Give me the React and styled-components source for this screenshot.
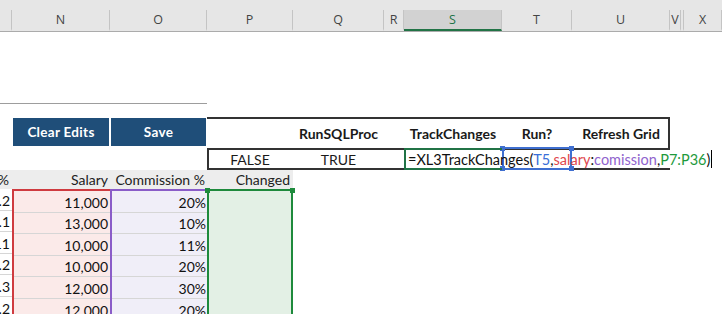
import React from "react";
import styled, { createGlobalStyle } from "styled-components";

const GlobalStyle = createGlobalStyle`
  html, body {
    margin: 0;
    padding: 0;
    background: #fff;
  }
  body {
    font-family: Lato, "Liberation Sans", sans-serif;
  }
`;

const WIDTHS = { M: 12, N: 98, O: 97, P: 86, Q: 91, R: 20, S: 98, T: 70, U: 98, V: 11, W: 3, X: 38 };
const LETTERS = Object.keys(WIDTHS);
// columns too narrow to show their letter
const HIDDEN = ["M", "W"];
const colsOf = (keys) => keys.map((k) => WIDTHS[k] + "px").join(" ");

const Page = styled.div`
  width: 722px;
  height: 314px;
  overflow: hidden;
  background: #fff;
`;

const ColumnBar = styled.div`
  display: flex;
  height: 32px;
  box-sizing: border-box;
  padding-top: 10px;
  background: #e6e6e6;
  border-bottom: 1px solid #ababab;
`;

const ColumnLetter = styled.div`
  flex: none;
  width: ${(p) => p.$w}px;
  box-sizing: border-box;
  display: flex;
  align-items: center;
  justify-content: center;
  overflow: hidden;
  border-right: 1px solid #c4c4c4;
  border-bottom: 2px solid ${(p) => (p.$active ? "#217346" : "transparent")};
  background: ${(p) => (p.$active ? "#d2d2d2" : "transparent")};
  color: ${(p) => (p.$active ? "#217346" : "#444")};
  font-family: "Open Sans", sans-serif;
  font-size: 12.5px;
`;

const Grid = styled.div`
  display: grid;
  grid-template-columns: ${colsOf(LETTERS)};
  grid-template-rows: 72px 13px 31px 22px 19px repeat(6, 21.6px);
`;

const TopRule = styled.div`
  grid-column: 1 / 4;
  grid-row: 1;
  border-bottom: 1px solid #9d9d9d;
`;

const ActionButton = styled.button`
  grid-row: 3;
  grid-column: ${(p) => p.$col};
  margin: 1px 1px 2px 1px;
  border: none;
  padding: 0;
  background: #1f4e79;
  color: #fff;
  font-family: Lato, sans-serif;
  font-weight: 700;
  font-size: 13.5px;
  letter-spacing: 0.3px;
  cursor: pointer;
`;

const Band = styled.div`
  grid-column: 4 / 10;
  grid-row: ${(p) => p.$row};
  display: grid;
  grid-template-columns: ${colsOf(["P", "Q", "R", "S", "T", "U"])};
  box-shadow: ${(p) => p.$edges};
`;

const Label = styled.div`
  grid-column: ${(p) => p.$col};
  display: flex;
  align-items: center;
  justify-content: center;
  padding-top: 2px;
  font-weight: 700;
  font-size: 14px;
  color: #1a1a1a;
  white-space: nowrap;
`;

const Value = styled.div`
  grid-column: ${(p) => p.$col};
  display: flex;
  align-items: center;
  justify-content: center;
  font-size: 14px;
  color: #1a1a1a;
`;

const FormulaCell = styled.div`
  grid-column: 4;
  position: relative;
  z-index: 1;
  box-sizing: border-box;
  border: 2px solid #217346;
  border-right-width: 0;
  display: flex;
  align-items: center;
  padding-left: 2px;
  white-space: nowrap;
  font-size: 14.5px;
  color: #111;
`;

const Ref = styled.span`
  color: ${(p) => p.$c};
`;

const Caret = styled.span`
  display: inline-block;
  width: 0;
  height: 18px;
  margin-left: 1px;
  border-left: 1px solid #000;
  vertical-align: middle;
`;

const RefBox = styled.div`
  grid-column: 5;
  position: relative;
  margin: -1px 0 0 0;
  border: 2px solid #3f6fd0;
`;

const Handle = styled.i`
  position: absolute;
  width: 5px;
  height: 5px;
  background: ${(p) => p.$c};
  ${(p) => (p.$top ? "top: -3px;" : "bottom: -3px;")}
  ${(p) => (p.$left ? "left: -4px;" : "right: -4px;")}
`;

const HeadRow = styled.div`
  grid-column: 1 / 5;
  grid-row: 5;
  display: grid;
  grid-template-columns: ${colsOf(["M", "N", "O", "P"])};
  background: #ededed;
`;

const HeadCell = styled.div`
  display: flex;
  justify-content: flex-end;
  align-items: flex-end;
  overflow: hidden;
  padding: 0 ${(p) => p.$pad}px 1px 0;
  font-size: 14px;
  color: #222;
  white-space: nowrap;
`;

const DataArea = styled.div`
  grid-column: 1 / 5;
  grid-row: 6 / span 6;
  display: grid;
  grid-template-columns: ${colsOf(["M", "N", "O", "P"])};
`;

const DataColumn = styled.div`
  position: relative;
  display: grid;
  grid-template-rows: repeat(6, 21.6px);
  background: ${(p) => p.$fill || "#fff"};
  box-sizing: border-box;
  ${(p) =>
    p.$edge &&
    `border-left: 2px solid ${p.$edge};
     border-top: 2px solid ${p.$edge};`}
  ${(p) => p.$boxed && `border-right: 2px solid ${p.$edge};`}
`;

const DataCell = styled.div`
  display: flex;
  justify-content: flex-end;
  align-items: flex-end;
  overflow: hidden;
  padding: 0 ${(p) => p.$pad}px 1px 0;
  border-bottom: 1px solid #d6d6d6;
  font-size: 14px;
  color: #111;
  white-space: nowrap;
`;

const rows = [
  { bonus: "0.2", salary: "11,000", pct: "20%" },
  { bonus: "0.1", salary: "13,000", pct: "10%" },
  { bonus: "0.11", salary: "10,000", pct: "11%" },
  { bonus: "0.2", salary: "10,000", pct: "20%" },
  { bonus: "0.3", salary: "12,000", pct: "30%" },
  { bonus: "0.2", salary: "12,000", pct: "20%" },
];

const App = () => {
  return (
    <Page>
      <GlobalStyle />
      <ColumnBar>
        {LETTERS.map((k) => (
          <ColumnLetter key={k} $w={WIDTHS[k]} $active={k === "S"}>
            {HIDDEN.includes(k) ? null : k}
          </ColumnLetter>
        ))}
      </ColumnBar>
      <Grid>
        <TopRule />
        <ActionButton $col={2}>Clear Edits</ActionButton>
        <ActionButton $col={3}>Save</ActionButton>

        <Band $row={3} $edges="inset 0 2px 0 #333, inset -2px 0 0 #333">
          <Label $col={2}>RunSQLProc</Label>
          <Label $col={4}>TrackChanges</Label>
          <Label $col={5}>Run?</Label>
          <Label $col={6}>Refresh Grid</Label>
        </Band>

        <Band $row={4} $edges="inset 0 2px 0 #333, inset 2px 0 0 #333, inset 0 -2px 0 #333">
          <Value $col={1}>FALSE</Value>
          <Value $col={2}>TRUE</Value>
          <FormulaCell>
            =XL3TrackChanges(<Ref $c="#3a6fd8">T5</Ref>,<Ref $c="#e0474c">salary</Ref>:
            <Ref $c="#9063cd">comission</Ref>,<Ref $c="#1e9a3c">P7:P36</Ref>)<Caret />
          </FormulaCell>
          <RefBox>
            <Handle $c="#3f6fd0" $top $left />
            <Handle $c="#3f6fd0" $top />
            <Handle $c="#3f6fd0" $left />
            <Handle $c="#3f6fd0" />
          </RefBox>
        </Band>

        <HeadRow>
          <HeadCell $pad={3}>Bonus %</HeadCell>
          <HeadCell $pad={2}>Salary</HeadCell>
          <HeadCell $pad={2}>Commission %</HeadCell>
          <HeadCell $pad={3}>Changed</HeadCell>
        </HeadRow>

        <DataArea>
          <DataColumn>
            {rows.map((r, i) => (
              <DataCell key={i} $pad={2}>{r.bonus}</DataCell>
            ))}
          </DataColumn>
          <DataColumn $edge="#cf3b40" $fill="#fbeae9">
            {rows.map((r, i) => (
              <DataCell key={i} $pad={2}>{r.salary}</DataCell>
            ))}
          </DataColumn>
          <DataColumn $edge="#8a5cc8" $fill="#f0eef8">
            {rows.map((r, i) => (
              <DataCell key={i} $pad={1}>{r.pct}</DataCell>
            ))}
          </DataColumn>
          <DataColumn $edge="#1e8a3c" $fill="#e3f0e5" $boxed>
            <Handle $c="#1e8a3c" $top $left />
            <Handle $c="#1e8a3c" $top />
          </DataColumn>
        </DataArea>
      </Grid>
    </Page>
  );
};

export default App;
